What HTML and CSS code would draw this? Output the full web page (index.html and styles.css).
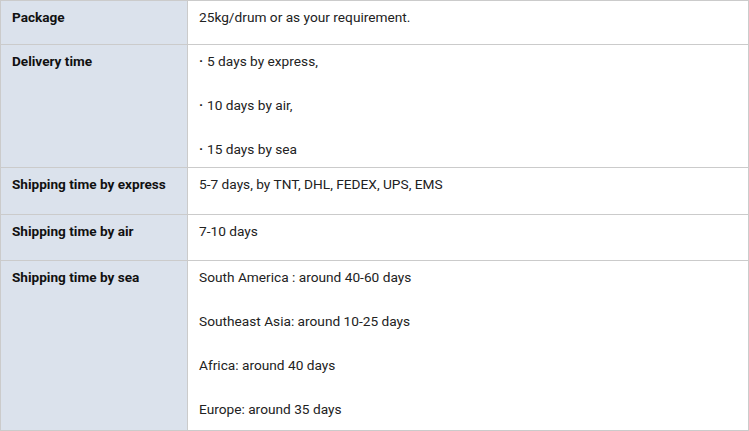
FILE: index.html
```html
<!DOCTYPE html>
<html>
<head>
<meta charset="utf-8">
<link rel="stylesheet" href="styles.css">
</head>
<body>
<table class="spec">
  <tr class="r-package">
    <th>Package</th>
    <td><div class="line">25kg/drum or as your requirement.</div></td>
  </tr>
  <tr class="r-delivery">
    <th>Delivery time</th>
    <td>
      <div class="line"><span class="dot">·</span>5 days by express,</div>
      <div class="line"><span class="dot">·</span>10 days by air,</div>
      <div class="line"><span class="dot">·</span>15 days by sea</div>
    </td>
  </tr>
  <tr class="r-express">
    <th>Shipping time by express</th>
    <td><div class="line">5-7 days, by TNT, DHL, FEDEX, UPS, EMS</div></td>
  </tr>
  <tr class="r-air">
    <th>Shipping time by air</th>
    <td><div class="line">7-10 days</div></td>
  </tr>
  <tr class="r-sea">
    <th>Shipping time by sea</th>
    <td>
      <div class="line">South America : around 40-60 days</div>
      <div class="line">Southeast Asia: around 10-25 days</div>
      <div class="line">Africa: around 40 days</div>
      <div class="line">Europe: around 35 days</div>
    </td>
  </tr>
</table>
</body>
</html>
```
FILE: styles.css
```css
html, body {
  margin: 0;
  padding: 0;
  background: #ffffff;
}
.spec {
  border-collapse: collapse;
  width: 749px;
  font-family: Roboto, "Liberation Sans", sans-serif;
  font-size: 13.7px;
  color: #222;
}
.spec th, .spec td {
  border: 1px solid #cbcbcb;
  vertical-align: top;
  text-align: left;
  padding: 6px 11px 0 11px;
}
.spec th {
  width: 164px;
  background: #dbe2ec;
  font-weight: 700;
  font-size: 13.6px;
  color: #111;
  line-height: 20px;
}
.line {
  line-height: 20px;
}
.line + .line {
  margin-top: 24px;
}
.dot {
  display: inline-block;
  width: 8px;
  font-weight: 700;
}
.r-package { height: 44px; }
.r-delivery { height: 123px; }
.r-express { height: 47px; }
.r-air { height: 46px; }
.r-sea { height: 170px; }
```
